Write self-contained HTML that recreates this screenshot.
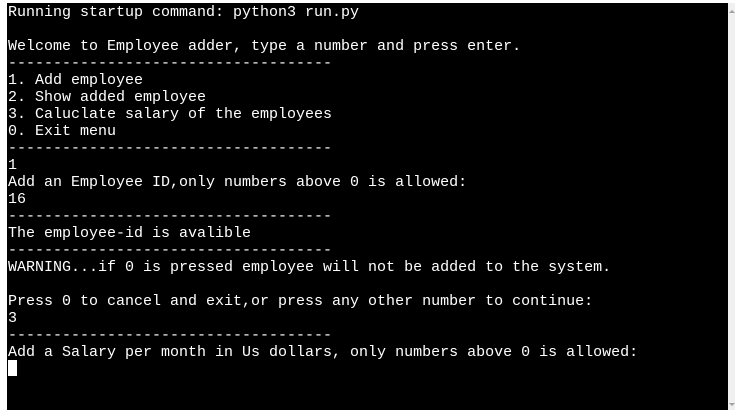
<!DOCTYPE html>
<html><head><meta charset="utf-8"><style>
html,body{margin:0;padding:0;background:#fff;width:735px;height:415px;overflow:hidden;position:relative}
#term{position:absolute;left:7px;top:3px;width:721px;height:407px;background:#000}
pre{position:absolute;left:8px;top:4px;margin:0;font-family:"Liberation Mono",monospace;font-size:15px;line-height:17px;color:#fff;white-space:pre}
#cur{position:absolute;left:8px;top:360px;width:9px;height:16px;background:#fff}
#sb{position:absolute;left:728px;top:3px;width:7px;height:407px;background:#f0f0f0}
.a{position:absolute;left:729px;width:0;height:0;border-left:3px solid transparent;border-right:3px solid transparent}
</style></head><body>
<div id="term"></div>
<pre>Running startup command: python3 run.py

Welcome to Employee adder, type a number and press enter.
------------------------------------
1. Add employee
2. Show added employee
3. Caluclate salary of the employees
0. Exit menu
------------------------------------
1
Add an Employee ID,only numbers above 0 is allowed:
16
------------------------------------
The employee-id is avalible
------------------------------------
WARNING...if 0 is pressed employee will not be added to the system.

Press 0 to cancel and exit,or press any other number to continue:
3
------------------------------------
Add a Salary per month in Us dollars, only numbers above 0 is allowed:</pre>
<div id="cur"></div>
<div id="sb"></div>
<div class="a" style="top:10px;border-bottom:3px solid #a0a0a0"></div>
<div class="a" style="top:403px;border-top:3px solid #a0a0a0"></div>
</body></html>
